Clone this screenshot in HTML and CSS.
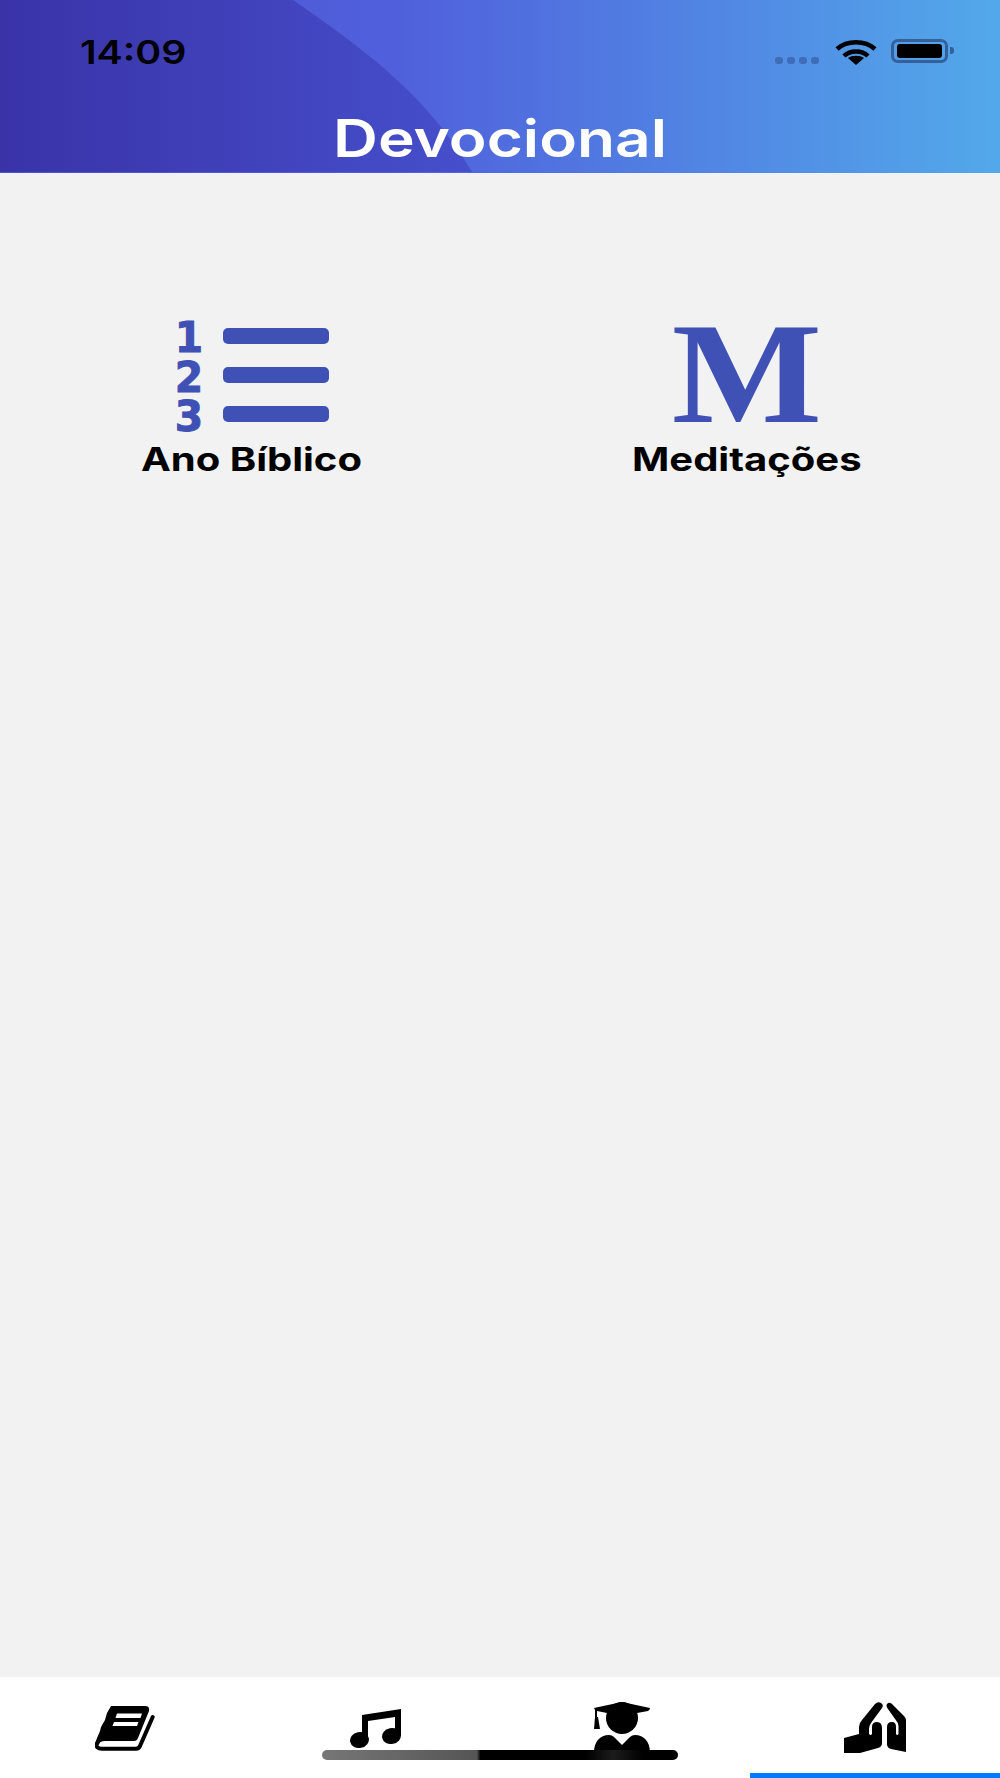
FILE: index.html
```html
<!DOCTYPE html>
<html>
<head>
    <title>Devocional</title>
    <link rel="stylesheet" href="styles.css">
</head>
<body>

    <div class="app">
        <header class="header">
            <svg class="header-curve" viewBox="0 0 480 172" preserveAspectRatio="none">
                <defs>
                    <linearGradient id="curveFill" x1="0" y1="0" x2="1" y2="0">
                        <stop offset="0" stop-color="#3a33a8"/>
                        <stop offset="1" stop-color="#464fcc"/>
                    </linearGradient>
                </defs>
                <path fill="url(#curveFill)" d="M0 0 H293 C350 40 425 90 472 172 H0 Z"/>
            </svg>
            <div class="status-bar">
                <span class="time">14:09</span>
                <div class="status-icons">
                    <div class="signal">
                        <span class="dot"></span>
                        <span class="dot"></span>
                        <span class="dot"></span>
                        <span class="dot"></span>
                    </div>
                    <svg class="wifi" viewBox="0 0 42 26">
                        <path class="wifi-arc" d="M2 10 C12 1 30 1 40 10"/>
                        <path class="wifi-arc" d="M9 17 C15 11 27 11 33 17"/>
                        <path d="M13 19 L21 26 L29 19 C25 16 17 16 13 19 Z"/>
                    </svg>
                    <div class="battery">
                        <div class="battery-fill"></div>
                    </div>
                    <div class="battery-nub"></div>
                </div>
            </div>
            <h1 class="title">Devocional</h1>
        </header>

        <main class="menu">
            <a class="menu-item">
                <div class="list-icon">
                    <div class="list-numbers">
                        <span>1</span>
                        <span>2</span>
                        <span>3</span>
                    </div>
                    <div class="list-bars">
                        <div class="bar"></div>
                        <div class="bar"></div>
                        <div class="bar"></div>
                    </div>
                </div>
                <span class="menu-label">Ano Bíblico</span>
            </a>
            <a class="menu-item">
                <div class="m-icon">M</div>
                <span class="menu-label">Meditações</span>
            </a>
        </main>

        <nav class="tabs">
            <div class="tab">
                <svg class="icon-book" viewBox="0 0 60 45">
                    <path d="M16 0 H50 Q55 0 54 5 L43 32 Q42 35 39 35 H10 Q5 35 3 39 L0 37 L5 25 L6 21 L10 14 L12 7 Z"/>
                    <path class="book-pages" d="M2.500 37 C0 41 3 42.700 7 42.700 H41 Q44 42.700 45 40 L57.700 11"/>
                    <path class="book-line" d="M22 7.500 H47 L45.500 12 H20.500 Z"/>
                    <path class="book-line" d="M19 16 H43.500 L42 20 H17.500 Z"/>
                </svg>
            </div>
            <div class="tab">
                <svg class="icon-music" viewBox="0 0 51 40">
                    <path d="M12 6 L51 0 V27 H45 V8 L18 12 V31 H12 Z"/>
                    <ellipse cx="9.500" cy="31" rx="9.500" ry="8" transform="rotate(-12 9.500 31)"/>
                    <ellipse cx="41.500" cy="27" rx="9.500" ry="8" transform="rotate(-12 41.500 27)"/>
                </svg>
            </div>
            <div class="tab tab-grad">
                <svg class="icon-grad" viewBox="0 0 56 50">
                    <path d="M0 6 L28 0 L56 6 Q56 8 54 9 L43 11 C38 8 18 8 13 11 L3 9 V15 H1 V8 Z"/>
                    <circle cx="28" cy="16" r="16"/>
                    <path d="M1 15 H4 L6 27 H0 Z"/>
                    <path d="M0 50 C0 40 6 33 15 33 Q18 33 20 35 L28 43 L36 35 Q38 33 41 33 C50 33 56 40 56 50 Z"/>
                </svg>
            </div>
            <div class="tab tab-active">
                <svg class="icon-hands" viewBox="0 0 62 51">
                    <path d="M0 36 L15 32 V25 Q15 21 18 18 L31 2 Q34 -1 37 1 Q40 3 38 6 L27 21 Q25 24 25 27 V32 Q26.500 34 28 32 V25 Q28 20 33 20 Q38 20 38 26 V41 Q38 45 34 46 L16 51 H0 Z"/>
                    <path d="M43 25 Q43 20 48 20 Q52 20 52 25 V32 Q53.200 34 54.500 32 V24 Q54.500 21 52.500 19 L44 7 Q41 3 44 1 Q46 0 48 2 L60 14 Q62 16 62 18 V50 L47 47 Q43 46 43 42 Z"/>
                </svg>
            </div>
            <div class="home-indicator"></div>
        </nav>
    </div>

</body>
</html>
```

FILE: styles.css
```css
* {
    box-sizing: border-box;
}

body {
    margin: 0;
    font-family: Inter, "Liberation Sans", sans-serif;
    background-color: #f2f2f2;
}

.app {
    width: 1000px;
    height: 1778px;
    display: flex;
    flex-direction: column;
    overflow: hidden;
}

/* header */
.header {
    position: relative;
    height: 173px;
    background: linear-gradient(90deg, #4c52d0 0%, #5060dc 40%, #52a9ea 100%);
    overflow: hidden;
}

.header-curve {
    position: absolute;
    left: 0;
    top: 0;
    width: 480px;
    height: 172px;
}

.status-bar {
    position: relative;
    height: 110px;
    padding: 37px 46px 0 80px;
    display: flex;
    justify-content: space-between;
}

.time {
    font-size: 33px;
    font-weight: 600;
    line-height: 30px;
    color: #000;
    transform: scaleX(1.19);
    transform-origin: left;
}

.status-icons {
    display: flex;
    align-items: flex-start;
    margin-top: 2px;
}

.signal {
    display: flex;
    gap: 4px;
    margin: 18px 15px 0 0;
}

.dot {
    width: 8px;
    height: 7px;
    border-radius: 3px;
    background-color: #3f6db8;
}

.wifi {
    width: 44px;
    height: 26px;
    margin-right: 13px;
    fill: #000;
}

.wifi-arc {
    fill: none;
    stroke: #000;
    stroke-width: 4.500;
}

.battery {
    width: 57px;
    height: 24px;
    padding: 2px 3px;
    border: 3px solid #35609a;
    border-radius: 7px;
}

.battery-fill {
    height: 100%;
    background-color: #000;
    border-radius: 3px;
}

.battery-nub {
    width: 4px;
    height: 7px;
    margin: 8px 0 0 2px;
    background-color: #35609a;
    border-radius: 0 3px 3px 0;
}

.title {
    position: relative;
    margin: 0;
    font-size: 52px;
    font-weight: 600;
    line-height: 58px;
    color: #fff;
    text-align: center;
    transform: scaleX(1.195);
}

/* menu */
.menu {
    flex: 1;
    display: grid;
    grid-template-columns: 1fr 1fr;
    align-items: start;
    padding: 147px 6px 0 4px;
}

.menu-item {
    display: flex;
    flex-direction: column;
    align-items: center;
}

.menu-label {
    font-size: 32px;
    font-weight: 700;
    line-height: 38px;
    color: #000;
    transform: scaleX(1.25);
}

.list-icon {
    display: flex;
    gap: 20px;
    height: 121px;
    color: #3f51b5;
}

.list-numbers {
    width: 28px;
    margin: -2px 0 0 1px;
    display: flex;
    flex-direction: column;
    align-items: center;
    font-family: "DejaVu Sans", sans-serif;
    font-size: 43px;
    font-weight: 700;
    line-height: 39.500px;
    -webkit-text-stroke: 1px #3f51b5;
    transform: scaleX(0.95);
}

.list-bars {
    width: 106px;
    padding-top: 8px;
    display: flex;
    flex-direction: column;
    gap: 23px;
}

.bar {
    height: 16px;
    background-color: #3f51b5;
    border-radius: 5px;
}

.m-icon {
    height: 121px;
    font-family: "Liberation Serif", serif;
    font-size: 144px;
    font-weight: 700;
    line-height: 108px;
    color: #3f51b5;
    transform: scaleX(1.105);
}

/* bottom tabs */
.tabs {
    position: relative;
    height: 101px;
    display: grid;
    grid-template-columns: repeat(4, 1fr);
    background-color: #fff;
}

.tab {
    display: flex;
    justify-content: center;
    align-items: flex-start;
    padding-top: 29px;
}

.tab-active {
    border-bottom: 5px solid #007aff;
    padding-top: 25px;
}

.tab-grad {
    padding-top: 25px;
    padding-right: 6px;
}

.tab svg {
    fill: #000;
    flex: none;
}

.icon-book {
    width: 60px;
    height: 45px;
}

.icon-music {
    width: 51px;
    height: 40px;
    margin-top: 3px;
}

.icon-grad {
    width: 56px;
    height: 50px;
}

.icon-hands {
    width: 62px;
    height: 51px;
}

.tab svg .book-pages {
    fill: none;
    stroke: #000;
    stroke-width: 4;
    stroke-linecap: round;
}

.tab svg .book-line {
    fill: #fff;
}

.home-indicator {
    position: absolute;
    left: 322px;
    top: 73px;
    width: 356px;
    height: 10px;
    border-radius: 5px;
    background: linear-gradient(90deg, #777 0%, #555 43.500%, #000 44.500%, #000 74%, #1c1c1c 82%, #000 90%);
}
```
